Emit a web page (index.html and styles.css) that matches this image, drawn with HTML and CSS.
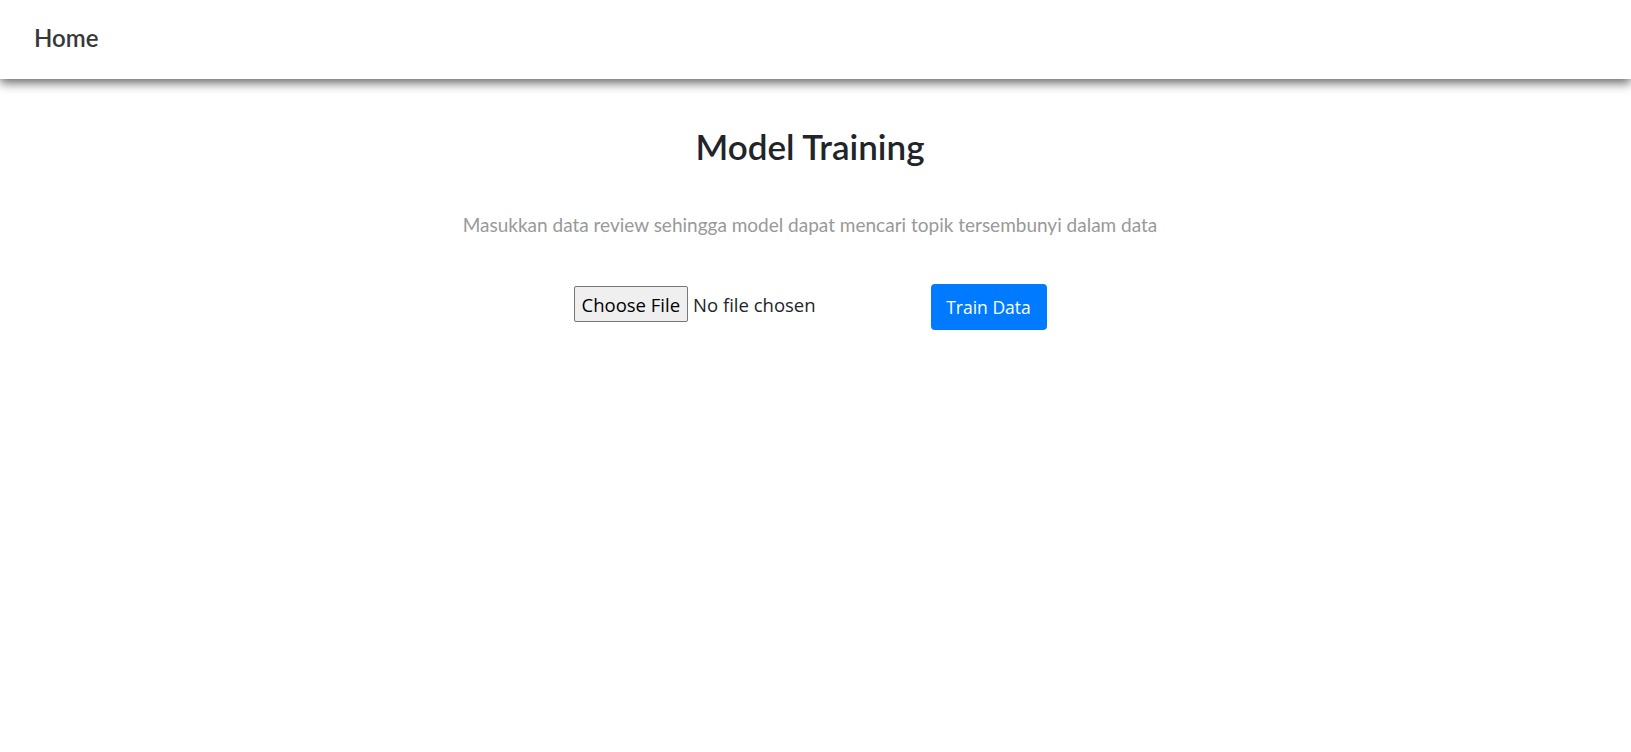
FILE: index.html
```html
<!DOCTYPE html>
<html lang="id">
<head>
<meta charset="utf-8">
<title>Model Training</title>
<link rel="stylesheet" href="styles.css">
</head>
<body>
<header class="navbar">
  <a class="brand" href="#">Home</a>
</header>
<main class="main">
  <h2 class="title">Model Training</h2>
  <p class="subtitle">Masukkan data review sehingga model dapat mencari topik tersembunyi dalam data</p>
  <form class="upload">
    <input class="file" type="file" name="file">
    <button class="btn" type="button">Train Data</button>
  </form>
</main>
</body>
</html>
```
FILE: styles.css
```css
html, body {
  margin: 0;
  padding: 0;
  background: #fff;
}
body {
  font-family: Lato, "Open Sans", sans-serif;
  color: #212529;
}
.navbar {
  height: 79px;
  display: flex;
  align-items: center;
  padding: 0 34px;
  background: #fff;
  box-shadow: 0 4px 10px rgba(0, 0, 0, 0.6);
  position: relative;
}
.brand {
  font-family: Lato, sans-serif;
  font-size: 24px;
  font-weight: 600;
  color: #383838;
  text-decoration: none;
  margin-top: -4px;
}
.main {
  display: flex;
  flex-direction: column;
  align-items: center;
  padding-right: 11px;
}
.title {
  margin: 46px 0 0;
  font-family: Lato, sans-serif;
  font-size: 35px;
  font-weight: 600;
  line-height: 1.2;
  color: #212529;
}
.subtitle {
  margin: 46px 0 0;
  font-size: 19px;
  color: #999;
}
.upload {
  margin-top: 48px;
  display: flex;
  align-items: flex-start;
}
.file {
  width: 357px;
  margin-top: 2px;
  font-family: "Open Sans", "Noto Sans", sans-serif;
  font-size: 18.5px;
  color: #212529;
}
.file::file-selector-button {
  font-family: "Open Sans", "Noto Sans", sans-serif;
  font-size: 18.5px;
  height: 36px;
  padding: 0 7px;
  margin-right: 5px;
  background: #efefef;
  border: 1px solid #767676;
  border-radius: 2px;
  color: #000;
}
.btn {
  width: 116px;
  height: 46px;
  background: #007bff;
  color: #fff;
  border: none;
  border-radius: 4px;
  font-family: "Open Sans", "Noto Sans", sans-serif;
  font-size: 17.5px;
  padding: 0;
}
```
